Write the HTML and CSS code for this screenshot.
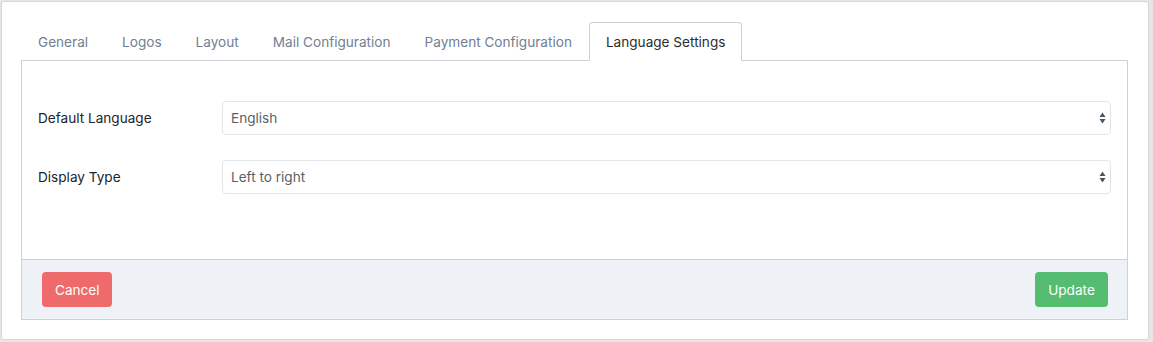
FILE: index.html
```html
<!DOCTYPE html>
<html lang="en">
<head>
<meta charset="utf-8">
<title>Language Settings</title>
<link rel="stylesheet" href="styles.css">
</head>
<body>
<div class="card">
  <ul class="tabs">
    <li class="tab">General</li>
    <li class="tab">Logos</li>
    <li class="tab">Layout</li>
    <li class="tab">Mail Configuration</li>
    <li class="tab">Payment Configuration</li>
    <li class="tab active">Language Settings</li>
  </ul>
  <div class="panel">
    <div class="panel-body">
      <div class="row">
        <label class="label">Default Language</label>
        <div class="select">
          <span>English</span>
          <svg class="arrows" width="7" height="12" viewBox="0 0 7 12"><path d="M3.5 0.5 L6.5 5 L0.5 5 Z M0.5 7 L6.5 7 L3.5 11.5 Z" fill="#4a5563"/></svg>
        </div>
      </div>
      <div class="row">
        <label class="label">Display Type</label>
        <div class="select">
          <span>Left to right</span>
          <svg class="arrows" width="7" height="12" viewBox="0 0 7 12"><path d="M3.5 0.5 L6.5 5 L0.5 5 Z M0.5 7 L6.5 7 L3.5 11.5 Z" fill="#4a5563"/></svg>
        </div>
      </div>
    </div>
    <div class="panel-footer">
      <button class="btn btn-cancel">Cancel</button>
      <button class="btn btn-update">Update</button>
    </div>
  </div>
</div>
</body>
</html>
```

FILE: styles.css
```css
html, body {
  margin: 0;
  padding: 0;
}
body {
  background: #e6e6e6;
  font-family: Inter, "Noto Sans", "Liberation Sans", sans-serif;
  font-size: 13.6px;
  color: #212529;
  padding: 1px 4px 2px 1px;
  height: 342px;
  box-sizing: border-box;
}
.card {
  background: #fff;
  border: 1px solid #d3d6da;
  border-radius: 3px;
  height: 339px;
  box-sizing: border-box;
  padding: 20px 20px 0 19px;
}
.tabs {
  list-style: none;
  margin: 0;
  padding: 0;
  display: flex;
  height: 39px;
  border-bottom: 1px solid #cdd1d6;
  box-sizing: border-box;
}
.tab {
  padding: 0 16px;
  line-height: 38px;
  height: 39px;
  box-sizing: border-box;
  border: 1px solid transparent;
  border-radius: 4px 4px 0 0;
  color: #718093;
  margin-bottom: -1px;
}
.tab.active {
  color: #2d2d2d;
  background: #fff;
  border-color: #cdd1d6 #cdd1d6 #fff;
}
.panel {
  border: 1px solid #cdd1d6;
  border-top: none;
  height: 259px;
  box-sizing: border-box;
  display: flex;
  flex-direction: column;
}
.panel-body {
  flex: 1;
  padding: 40px 16px 0 16px;
  display: flex;
  flex-direction: column;
  gap: 25px;
}
.row {
  display: grid;
  grid-template-columns: 184px 1fr;
  align-items: center;
}
.label {
  color: #212529;
}
.select {
  height: 34px;
  border: 1px solid #e3e6e9;
  border-radius: 4px;
  box-sizing: border-box;
  display: flex;
  align-items: center;
  justify-content: space-between;
  padding: 0 4px 0 8px;
  color: #5a5f66;
}
.arrows {
  display: block;
}
.panel-footer {
  height: 60px;
  box-sizing: border-box;
  background: #eef1f5;
  border-top: 1px solid #cdd1d6;
  padding: 12px 19px 0 20px;
  display: flex;
  justify-content: space-between;
  align-items: flex-start;
}
.btn {
  font-family: inherit;
  font-size: 13.6px;
  height: 35px;
  border: none;
  border-radius: 4px;
  color: #fff;
  padding: 0 13px;
}
.btn-cancel {
  background: #ef6b6b;
  width: 70px;
}
.btn-update {
  background: #54bd72;
  width: 73px;
}
```
